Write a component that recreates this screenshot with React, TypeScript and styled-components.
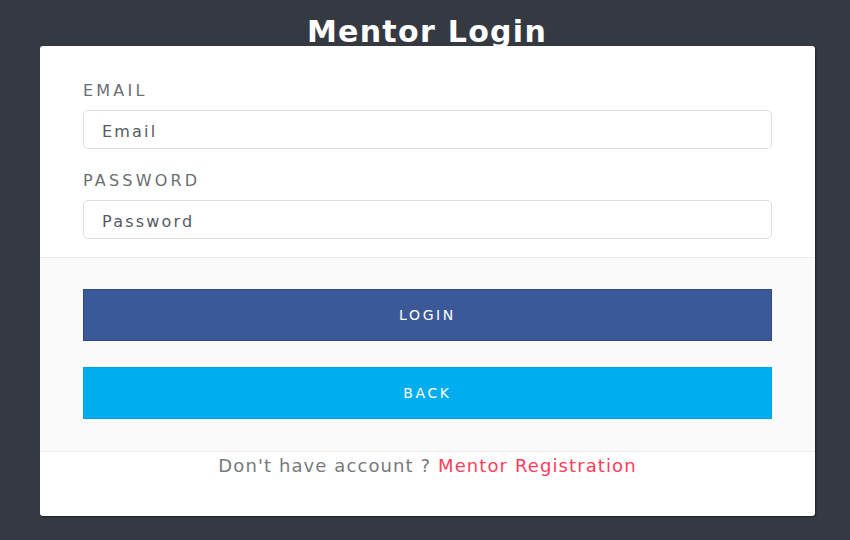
import React from "react";
import styled, { createGlobalStyle } from "styled-components";

const GlobalStyle = createGlobalStyle`
  html, body {
    margin: 0;
    padding: 0;
    background: #353a42;
    font-family: "DejaVu Sans", "Open Sans", sans-serif;
  }
`;

export const Page = styled.div`
  width: 850px;
  height: 540px;
  background: #353a42;
  box-sizing: border-box;
  display: flex;
  flex-flow: column;
`;

export const Title = styled.h1`
  margin: 0;
  height: 46px;
  display: flex;
  align-items: flex-end;
  justify-content: center;
  color: #ffffff;
  font-size: 30px;
  font-weight: bold;
  line-height: 28px;
  letter-spacing: 1.3px;
  padding-left: 4px;
  box-sizing: border-box;
`;

export const Card = styled.div`
  position: relative;
  margin: 0 35px 0 40px;
  width: 775px;
  background: #ffffff;
  border-radius: 3px;
  box-shadow: 1px 1px 2px rgba(0, 0, 0, 0.45);
  overflow: hidden;
`;

export const CardBody = styled.div`
  padding: 34px 43px 18px;
  display: flex;
  flex-flow: column;
  border-bottom: 1px solid #ececec;
`;

export const Field = styled.div`
  display: flex;
  flex-flow: column;
  margin-top: 21px;

  &:first-child {
    margin-top: 0;
  }
`;

export const Label = styled.label`
  color: #6b6e74;
  font-size: 16px;
  line-height: 22px;
  letter-spacing: 3.2px;
  margin-bottom: 8px;
`;

export const Input = styled.input`
  height: 39px;
  box-sizing: border-box;
  border: 1.5px solid #dcdfe5;
  border-radius: 5px;
  padding: 3px 18px 0;
  font-family: inherit;
  font-size: 16px;
  letter-spacing: 2.2px;
  color: #555a63;
  outline: none;

  &::placeholder {
    color: #555a63;
  }
`;

export const Actions = styled.div`
  background: #fafafa;
  padding: 31px 43px 32px;
  display: flex;
  flex-flow: column;
  gap: 26px;
  border-bottom: 1px solid #ececec;
`;

export const Button = styled.button<{ $color: string; $edge: string }>`
  height: 52px;
  border: 1px solid ${(p) => p.$edge};
  background: ${(p) => p.$color};
  color: #ffffff;
  font-family: inherit;
  font-size: 14px;
  letter-spacing: 2.6px;
  cursor: pointer;
`;

export const Footer = styled.div`
  padding: 3px 0 39px;
  text-align: center;
  font-size: 18px;
  line-height: 22px;
  letter-spacing: 1.1px;
  color: #77797e;
`;

export const RegLink = styled.a`
  color: #ff3d5c;
  cursor: pointer;
`;

const App: React.FC = () => {
  return (
    <>
      <GlobalStyle />
      <Page>
        <Title>Mentor Login</Title>
        <Card>
          <CardBody>
            <Field>
              <Label>EMAIL</Label>
              <Input type="email" placeholder="Email" />
            </Field>
            <Field>
              <Label>PASSWORD</Label>
              <Input type="password" placeholder="Password" />
            </Field>
          </CardBody>
          <Actions>
            <Button $color="#3b5998" $edge="#2f4a85">LOGIN</Button>
            <Button $color="#00adef" $edge="#00a3e2">BACK</Button>
          </Actions>
          <Footer>
            Don't have account ? <RegLink>Mentor Registration</RegLink>
          </Footer>
        </Card>
      </Page>
    </>
  );
};

export default App;
